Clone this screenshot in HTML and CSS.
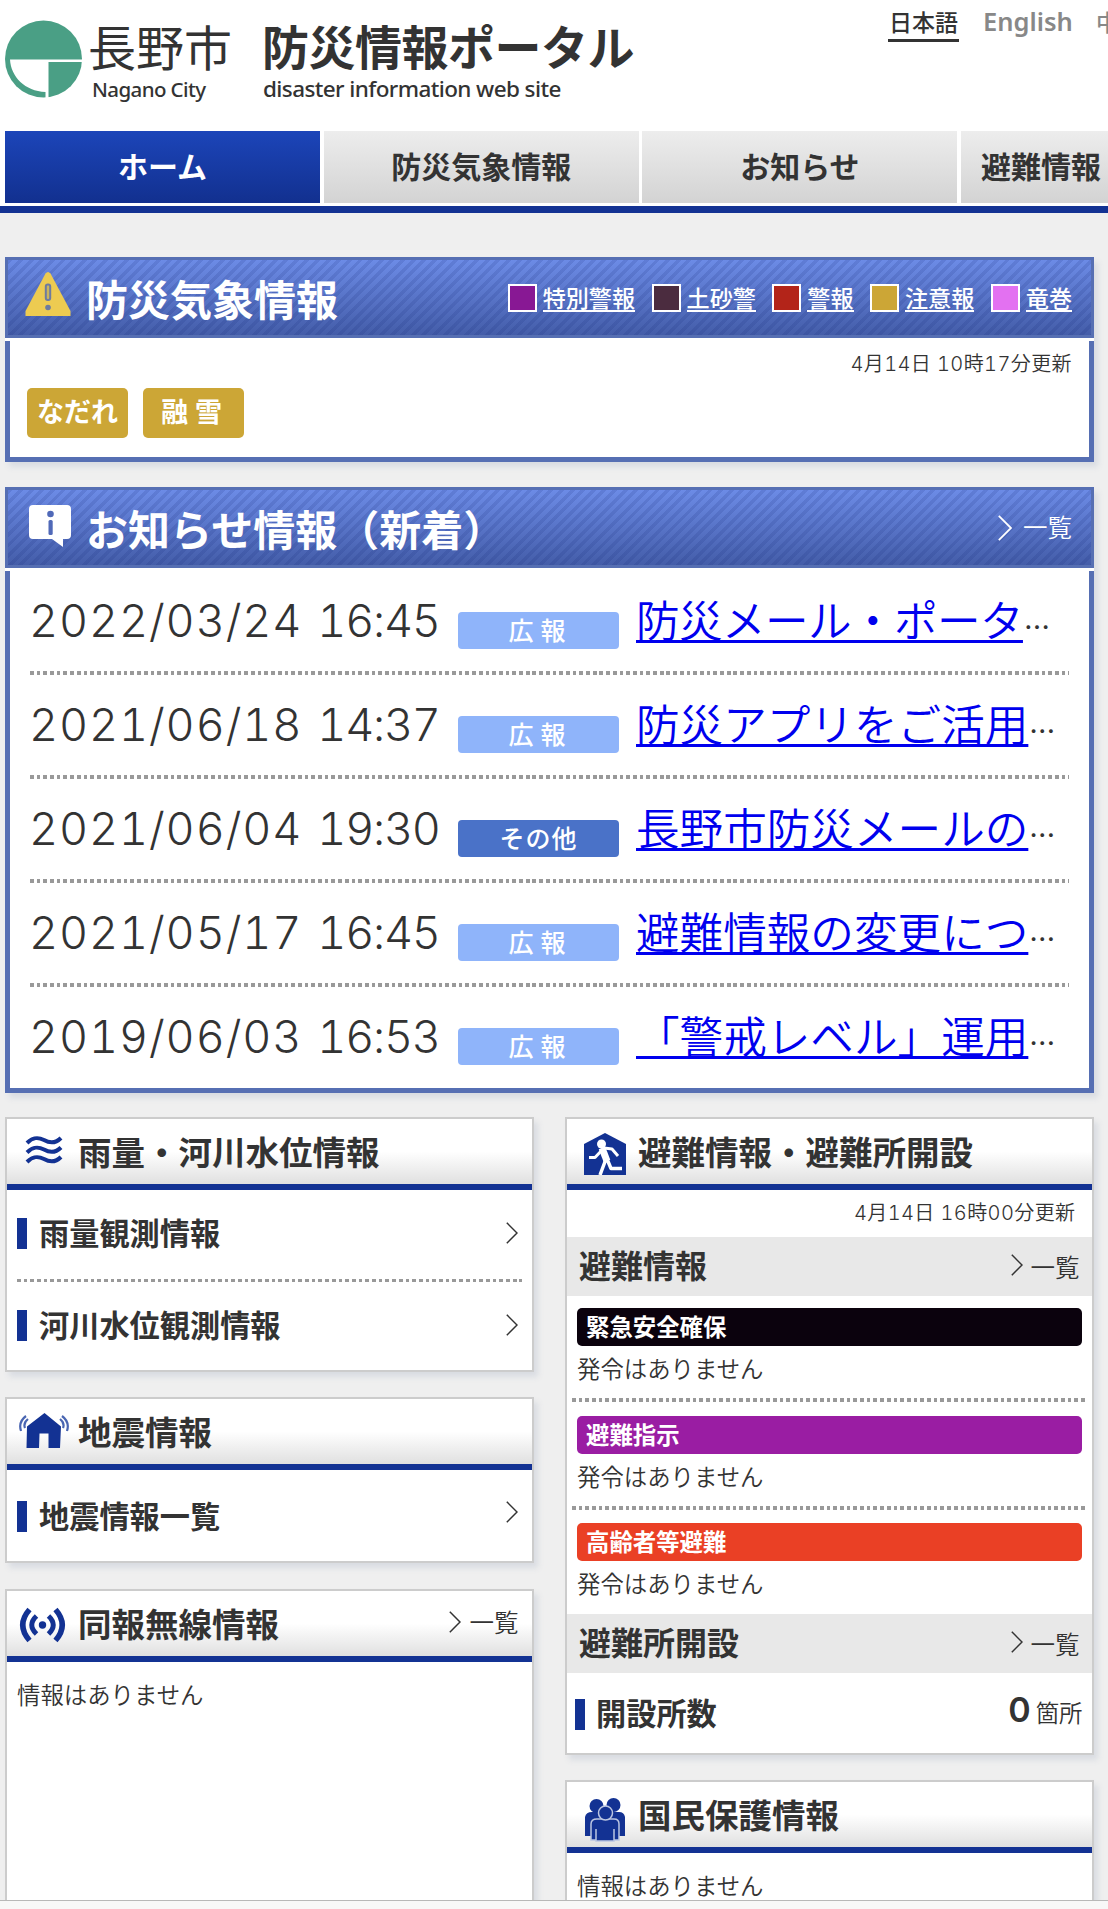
FILE: index.html
```html
<!DOCTYPE html>
<html lang="ja">
<head>
  <meta charset="UTF-8">
  <meta name="viewport" content="width=device-width, initial-scale=1.0">
  <title>長野市 防災情報ポータル</title>
  <link rel="stylesheet" href="styles.css">
</head>
<body>
  <div class="page">
    <header class="header">
      <svg class="logo" viewBox="0 0 77 78">
        <circle cx="38.5" cy="39" r="38.5" fill="#4a9f85"/>
        <path d="M5 39.5H77V42H43.5V78H40.5V72C20 71 6 57 5 39.5Z" fill="#fff"/>
      </svg>
      <div class="city">
        <p class="city-name">長野市</p>
        <p class="city-en">Nagano City</p>
      </div>
      <div class="site">
        <h1 class="site-name">防災情報ポータル</h1>
        <p class="site-en">disaster information web site</p>
      </div>
      <ul class="lang">
        <li class="current">日本語</li>
        <li class="en">English</li>
        <li>中文</li>
      </ul>
    </header>

    <nav class="nav">
      <a class="active">ホーム</a>
      <a>防災気象情報</a>
      <a>お知らせ</a>
      <a class="last">避難情報</a>
    </nav>

    <main class="main">
      <section class="panel">
        <div class="panel-head">
          <svg class="panel-icon" width="46" height="44" viewBox="0 0 46 44">
            <path d="M20.500 1.500Q23-1.500 25.500 1.500L45.500 39V44H.5V39Z" fill="#edcb51"/>
            <rect x="20.800" y="12.500" width="4.400" height="15.500" rx="2" fill="#c9b45e" stroke="#6d7ba0" stroke-width="2"/>
            <circle cx="23" cy="35.500" r="2.800" fill="#6d7ba0"/>
          </svg>
          <h2>防災気象情報</h2>
          <ul class="legend">
            <li><i class="special"></i><span>特別警報</span></li>
            <li><i class="landslide"></i><span>土砂警</span></li>
            <li><i class="warning"></i><span>警報</span></li>
            <li><i class="advisory"></i><span>注意報</span></li>
            <li><i class="tornado"></i><span>竜巻</span></li>
          </ul>
        </div>
        <div class="panel-body weather">
          <p class="updated">4月14日 10時17分更新</p>
          <div class="alerts">
            <span>なだれ</span>
            <span class="wide">融雪</span>
          </div>
        </div>
      </section>

      <section class="panel news-panel">
        <div class="panel-head">
          <svg class="panel-icon info" width="42" height="42" viewBox="0 0 42 42">
            <path d="M4 0H38Q42 0 42 4V30Q42 34 38 34H34V42L23 34H4Q0 34 0 30V4Q0 0 4 0Z" fill="#fff"/>
            <circle cx="21.500" cy="9" r="3.300" fill="#5069b8"/>
            <rect x="19.500" y="15" width="4.200" height="15" rx="1.500" fill="#5069b8"/>
          </svg>
          <h2>お知らせ情報（新着）</h2>
          <a class="more"><svg class="chev" viewBox="0 0 14 26"><path d="M.8 .8L13 13L.8 25.200"/></svg>一覧</a>
        </div>
        <ul class="panel-body news">
          <li><time>2022/03/24 <span>16:45</span></time><span class="tag">広報</span><a class="tight">防災メール・ポータ</a><b>…</b></li>
          <li><time>2021/06/18 <span>14:37</span></time><span class="tag">広報</span><a>防災アプリをご活用</a><b>…</b></li>
          <li><time>2021/06/04 <span>19:30</span></time><span class="tag other">その他</span><a>長野市防災メールの</a><b>…</b></li>
          <li><time>2021/05/17 <span>16:45</span></time><span class="tag">広報</span><a>避難情報の変更につ</a><b>…</b></li>
          <li><time>2019/06/03 <span>16:53</span></time><span class="tag">広報</span><a>「警戒レベル」運用</a><b>…</b></li>
        </ul>
      </section>

      <div class="columns">
        <div class="column">
          <section class="card rain">
            <div class="card-head">
              <svg class="card-icon" viewBox="0 0 56 46" fill="none" stroke="#133293" stroke-width="4">
                <path d="M8 11C14 5 19 5 25 8C32 12 37 11 42 6M8 20.500C14 14.500 19 14.500 25 17.500C32 21.500 37 20.500 42 15.500M8 30C14 24 19 24 25 27C32 31 37 30 42 25"/>
              </svg>
              <h3>雨量・河川水位情報</h3>
            </div>
            <ul class="links">
              <li><span>雨量観測情報</span><svg class="chev" viewBox="0 0 12 22"><path d="M.8 .8L11 11L.8 21.200"/></svg></li>
              <li><span>河川水位観測情報</span><svg class="chev" viewBox="0 0 12 22"><path d="M.8 .8L11 11L.8 21.200"/></svg></li>
            </ul>
          </section>

          <section class="card quake">
            <div class="card-head">
              <svg class="card-icon" viewBox="0 0 56 46">
                <path d="M25.500 1L42 14.500L41 36H29.500V21.500H20.500L20 36H7.500L8 14.500Z" fill="#133293"/>
                <path d="M2 19Q-1 10 7 4M6 16Q4 11 9 7M48 19Q51 10 43 4M44 16Q46 11 41 7" fill="none" stroke="#4a66b2" stroke-width="2.200"/>
              </svg>
              <h3>地震情報</h3>
            </div>
            <ul class="links">
              <li><span>地震情報一覧</span><svg class="chev" viewBox="0 0 12 22"><path d="M.8 .8L11 11L.8 21.200"/></svg></li>
            </ul>
          </section>

          <section class="card radio">
            <div class="card-head">
              <svg class="card-icon" viewBox="0 0 56 46" fill="none" stroke="#133293" stroke-width="5.500">
                <path d="M10.500 5.500Q-3 21 10.500 36.500M36.500 5.500Q50 21 36.500 36.500"/>
                <path d="M17.500 12Q8 21 17.500 30M29.500 12Q39 21 29.500 30" stroke-width="5"/>
                <circle cx="23.500" cy="21" r="3.700" fill="#133293" stroke="none"/>
              </svg>
              <h3>同報無線情報</h3>
              <a class="more"><svg class="chev" viewBox="0 0 12 22"><path d="M.8 .8L11 11L.8 21.200"/></svg>一覧</a>
            </div>
            <p class="empty">情報はありません</p>
          </section>
        </div>

        <div class="column">
          <section class="card shelter">
            <div class="card-head">
              <svg class="card-icon run" viewBox="0 0 42 42">
                <path d="M21 0L42 11V42H0V11Z" fill="#133293"/>
                <circle cx="17.500" cy="11" r="4.500" fill="#fff"/>
                <g fill="none" stroke="#fff" stroke-linejoin="round">
                  <path d="M18 15L23 28" stroke-width="7"/>
                  <path d="M19 16L11 24.500H5M20 15L28 16L34 23" stroke-width="3"/>
                  <path d="M22 26L19 34L16 42M23 26L27 35.500H38" stroke-width="3.500"/>
                </g>
              </svg>
              <h3>避難情報・避難所開設</h3>
            </div>
            <p class="updated">4月14日 16時00分更新</p>
            <div class="sub-head">
              <h4>避難情報</h4>
              <a class="more"><svg class="chev" viewBox="0 0 12 22"><path d="M.8 .8L11 11L.8 21.200"/></svg>一覧</a>
            </div>
            <div class="levels">
              <div class="level"><strong class="l5">緊急安全確保</strong><p>発令はありません</p></div>
              <div class="level"><strong class="l4">避難指示</strong><p>発令はありません</p></div>
              <div class="level"><strong class="l3">高齢者等避難</strong><p>発令はありません</p></div>
            </div>
            <div class="sub-head">
              <h4>避難所開設</h4>
              <a class="more"><svg class="chev" viewBox="0 0 12 22"><path d="M.8 .8L11 11L.8 21.200"/></svg>一覧</a>
            </div>
            <div class="count">
              <span>開設所数</span>
              <p><b>0</b>箇所</p>
            </div>
          </section>

          <section class="card protect">
            <div class="card-head">
              <svg class="card-icon people" viewBox="0 0 40 44">
                <g fill="#133293">
                  <circle cx="11.500" cy="8" r="7"/>
                  <circle cx="28.500" cy="7" r="7"/>
                  <path d="M0 19Q1 14 7 14H34Q39 14 40 19V38H0Z"/>
                </g>
                <g fill="#133293" stroke="#bcc6e2" stroke-width="1.500">
                  <path d="M6 42V26Q6 21 12 21H29Q34 21 34 26V42H29V31V43H11V31V42Z"/>
                  <circle cx="20.500" cy="15" r="7"/>
                </g>
              </svg>
              <h3>国民保護情報</h3>
            </div>
            <p class="empty">情報はありません</p>
          </section>
        </div>
      </div>
    </main>
  </div>
  <div class="toolbar"></div>
</body>
</html>
```

FILE: styles.css
```css
* {
  box-sizing: border-box;
  margin: 0;
  padding: 0;
}
html, body {
  height: 1909px;
  overflow: hidden;
}
body {
  width: 1108px;
  background: #efefef;
  color: #333;
  font-family: "Noto Sans CJK JP", sans-serif;
  font-weight: 350;
}
ul {
  list-style: none;
}
.page {
  height: 1900px;
  overflow: hidden;
}
.toolbar {
  height: 9px;
  background: #f8f8f8;
  border-top: 1px solid #b8b8b8;
}

/* header */
.header {
  display: flex;
  height: 131px;
  padding-left: 5px;
  background: #fff;
  white-space: nowrap;
}
.header > * {
  flex: none;
}
.logo {
  width: 77px;
  height: 78px;
  margin-top: 20px;
}
.city {
  width: 174px;
  margin: 19px 0 0 6px;
}
.city-name {
  font-size: 48px;
  line-height: 52px;
  font-weight: 400;
}
.city-en, .site-en {
  font-family: "Noto Sans", sans-serif;
  font-weight: 500;
  line-height: 36px;
}
.city-en {
  padding-left: 4px;
  font-size: 20.500px;
  letter-spacing: -0.600px;
}
.site {
  width: 626px;
  margin-top: 19px;
}
.site-name {
  font-size: 47px;
  line-height: 52px;
  letter-spacing: -0.5px;
}
.site-en {
  font-size: 22.500px;
  padding-left: 1px;
  letter-spacing: -0.600px;
}
.lang {
  display: flex;
  margin-top: 5px;
  color: #888;
  font-size: 23px;
  line-height: 32px;
  font-weight: 500;
}
.lang li {
  height: 37px;
  margin-right: 24px;
  flex: none;
}
.lang .current {
  width: 71px;
  border-bottom: 3px solid #333;
  color: #333;
  text-align: center;
}
.lang .en {
  width: 89px;
  font-family: "Noto Sans", sans-serif;
  font-size: 25.500px;
  font-weight: 600;
}

/* nav */
.nav {
  display: flex;
  gap: 3.700px;
  height: 82px;
  padding-left: 5px;
  background: #fff;
  border-bottom: 7px solid #133293;
}
.nav a {
  flex: none;
  width: 315px;
  height: 72px;
  background: linear-gradient(#ededed, #d3d3d3);
  font-size: 30px;
  font-weight: 700;
  line-height: 68px;
  text-align: center;
}
.nav .active {
  background: linear-gradient(#1c45b9, #12308f);
  color: #fff;
}
.nav .last {
  padding-left: 20px;
  text-align: left;
}

/* wide panels */
.main {
  padding: 44px 14px 0 5px;
}
.panel {
  background: #fff;
  box-shadow: 4px 5px 6px #d9dce2;
}
.news-panel {
  margin: 25px 0;
}
.panel-head {
  display: flex;
  height: 81px;
  padding: 0 19px 0 17px;
  border: 3px solid #566fb3;
  background:
    repeating-linear-gradient(135deg, rgba(20, 40, 120, .14) 0 3.500px, transparent 3.500px 7.500px),
    linear-gradient(#6c8be6, #445da9);
  color: #fff;
}
.panel-icon {
  flex: none;
  margin-top: 12px;
}
.panel-icon.info {
  margin: 15px 0 0 4px;
}
.panel-head h2 {
  margin-left: 15px;
  font-size: 42px;
  line-height: 75px;
  white-space: nowrap;
}
.legend {
  display: flex;
  gap: 16.500px;
  margin: 24px 0 0 auto;
}
.legend li {
  display: flex;
  gap: 6px;
}
.legend i {
  width: 29px;
  height: 28px;
  border: 2px solid #fff;
}
.legend span {
  height: 28px;
  border-bottom: 2px solid #fff;
  font-size: 23.100px;
  font-weight: 500;
  line-height: 26px;
}
.special { background: #881894; }
.landslide { background: #4b2c3f; }
.warning { background: #b32419; }
.advisory { background: #cca636; }
.tornado { background: #e371f1; }

.panel-body {
  margin-top: 3px;
  border: 5px solid #566fb3;
  border-top: 0;
}
.weather {
  height: 121px;
  padding: 9px 17px 0;
}
.updated {
  font-family: Inter, "Noto Sans CJK JP", sans-serif;
  font-size: 20px;
  line-height: 28px;
  letter-spacing: 0.400px;
  font-variant-numeric: tabular-nums;
  text-align: right;
}
.alerts {
  display: flex;
  gap: 15px;
  margin-top: 10px;
}
.alerts span {
  width: 101px;
  height: 50px;
  border-radius: 5px;
  background: #cca636;
  color: #fff;
  font-size: 27px;
  font-weight: 700;
  line-height: 46px;
  text-align: center;
}
.alerts .wide {
  letter-spacing: 7px;
  padding-left: 3px;
}

.chev {
  flex: none;
  width: 12px;
  height: 22px;
  fill: none;
  stroke: currentColor;
  stroke-width: 1.500;
}
.more {
  display: flex;
  margin-left: auto;
  font-size: 24.500px;
}
.panel-head .more {
  gap: 11px;
  line-height: 74px;
}
.panel-head .chev {
  width: 14px;
  height: 26px;
  margin-top: 25px;
  stroke-width: 1.800;
}

/* news */
.news {
  height: 522px;
  padding: 0 20px;
}
.news li {
  display: flex;
  height: 104px;
  background: repeating-linear-gradient(90deg, #999 0 3.700px, transparent 3.700px 6.700px) left bottom / 100% 4px no-repeat;
  white-space: nowrap;
}
.news li:last-child {
  background: none;
}
.news time {
  width: 428px;
  margin-left: -1px;
  margin-right: 1px;
  font-family: Inter, sans-serif;
  font-size: 45px;
  line-height: 100px;
  letter-spacing: 0.900px;
  font-variant-numeric: tabular-nums;
}
.news time span {
  margin-left: 2px;
  letter-spacing: -1.200px;
}
.tag {
  width: 161px;
  height: 37px;
  margin-top: 41px;
  padding-left: 4px;
  border-radius: 4px;
  background: #8fb4fa;
  color: #fff;
  font-size: 25px;
  font-weight: 500;
  line-height: 35px;
  text-align: center;
  letter-spacing: 7px;
}
.tag.other {
  padding: 0;
  background: #4a72c8;
  letter-spacing: 1px;
}
.news a {
  margin-left: 17px;
  color: #0000ee;
  font-size: 43.600px;
  line-height: 95px;
  text-decoration: underline;
  text-decoration-thickness: 3px;
  text-underline-offset: 3px;
}
.news .tight {
  letter-spacing: -0.600px;
}
.news b {
  margin-left: 1px;
  font-size: 26px;
  line-height: 109px;
  font-weight: 500;
}

/* cards */
.columns {
  display: flex;
  gap: 31.500px;
  margin-top: -1px;
}
.column {
  width: 528.500px;
}
.card {
  border: 2px solid #ccc;
  background: #fff;
  box-shadow: 4px 5px 6px #d9dce2;
}
.card-head {
  display: flex;
  height: 71px;
  padding: 0 13px;
  border-bottom: 6px solid #133293;
  background: linear-gradient(#fff 50%, #e0e0e0);
}
.card-icon {
  flex: none;
  width: 56px;
  height: 46px;
  margin: 13px 3px 0 -1px;
}
.card-icon.run {
  width: 42px;
  height: 42px;
  margin: 14px 12px 0 4px;
}
.card-icon.people {
  width: 40px;
  height: 44px;
  margin: 16px 13px 0 5px;
}
.card-head h3 {
  font-size: 33.500px;
  line-height: 64px;
  white-space: nowrap;
}
.card-head .more {
  gap: 9px;
  line-height: 62px;
}
.card-head .chev {
  margin-top: 20px;
}
.rain {
  height: 255px;
}
.quake {
  height: 166px;
  margin: 25px 0 26px;
}
.radio {
  height: 420px;
}
.links {
  padding: 0 10px;
}
.links li {
  display: flex;
  justify-content: space-between;
  height: 92px;
  padding-right: 4px;
  background: repeating-linear-gradient(90deg, #999 0 3.700px, transparent 3.700px 6.700px) left bottom / 100% 3px no-repeat;
}
.links li:last-child {
  background: none;
}
.links span, .count span {
  height: 31px;
  margin-top: 28px;
  padding-left: 12px;
  border-left: 10px solid #133293;
  font-size: 30.200px;
  font-weight: 700;
  line-height: 28px;
}
.links .chev {
  margin-top: 32px;
}
.quake .links span {
  margin-top: 31px;
}
.quake .links .chev {
  margin-top: 31px;
}
.empty {
  padding: 12px 10px;
  font-size: 23.400px;
  line-height: 40px;
}
.shelter {
  height: 638px;
  margin-bottom: 25px;
}
.shelter .updated {
  height: 47px;
  padding: 9px 16px 0;
}
.sub-head {
  display: flex;
  height: 59px;
  padding: 0 12px;
  background: #e8e8e8;
}
.sub-head h4 {
  font-size: 32px;
  line-height: 55px;
}
.sub-head .more {
  gap: 8px;
  line-height: 59px;
}
.sub-head .chev {
  margin-top: 17px;
}
.levels {
  height: 318px;
  padding: 0 5px;
}
.level {
  height: 107.500px;
  padding: 12px 5px 0;
  background: repeating-linear-gradient(90deg, #999 0 3.700px, transparent 3.700px 6.700px) left 102px / 100% 4px no-repeat;
}
.level:last-child {
  background: none;
}
.level strong {
  display: block;
  height: 38px;
  padding-left: 9px;
  border-radius: 5px;
  color: #fff;
  font-size: 23.400px;
  font-weight: 700;
  line-height: 36px;
}
.l5 { background: #0b020d; }
.l4 { background: #9a1da3; }
.l3 { background: #ea4025; }
.level p {
  font-size: 23.400px;
  line-height: 45px;
}
.count {
  display: flex;
  justify-content: space-between;
  padding: 0 9px 0 8px;
}
.count span {
  margin-top: 26px;
  padding-left: 11px;
  line-height: 26px;
}
.count p {
  font-size: 23.400px;
  line-height: 74px;
}
.count b {
  margin-right: 5px;
  font-family: Inter, sans-serif;
  font-size: 34px;
  font-weight: 600;
}
.protect {
  height: 200px;
}
```
